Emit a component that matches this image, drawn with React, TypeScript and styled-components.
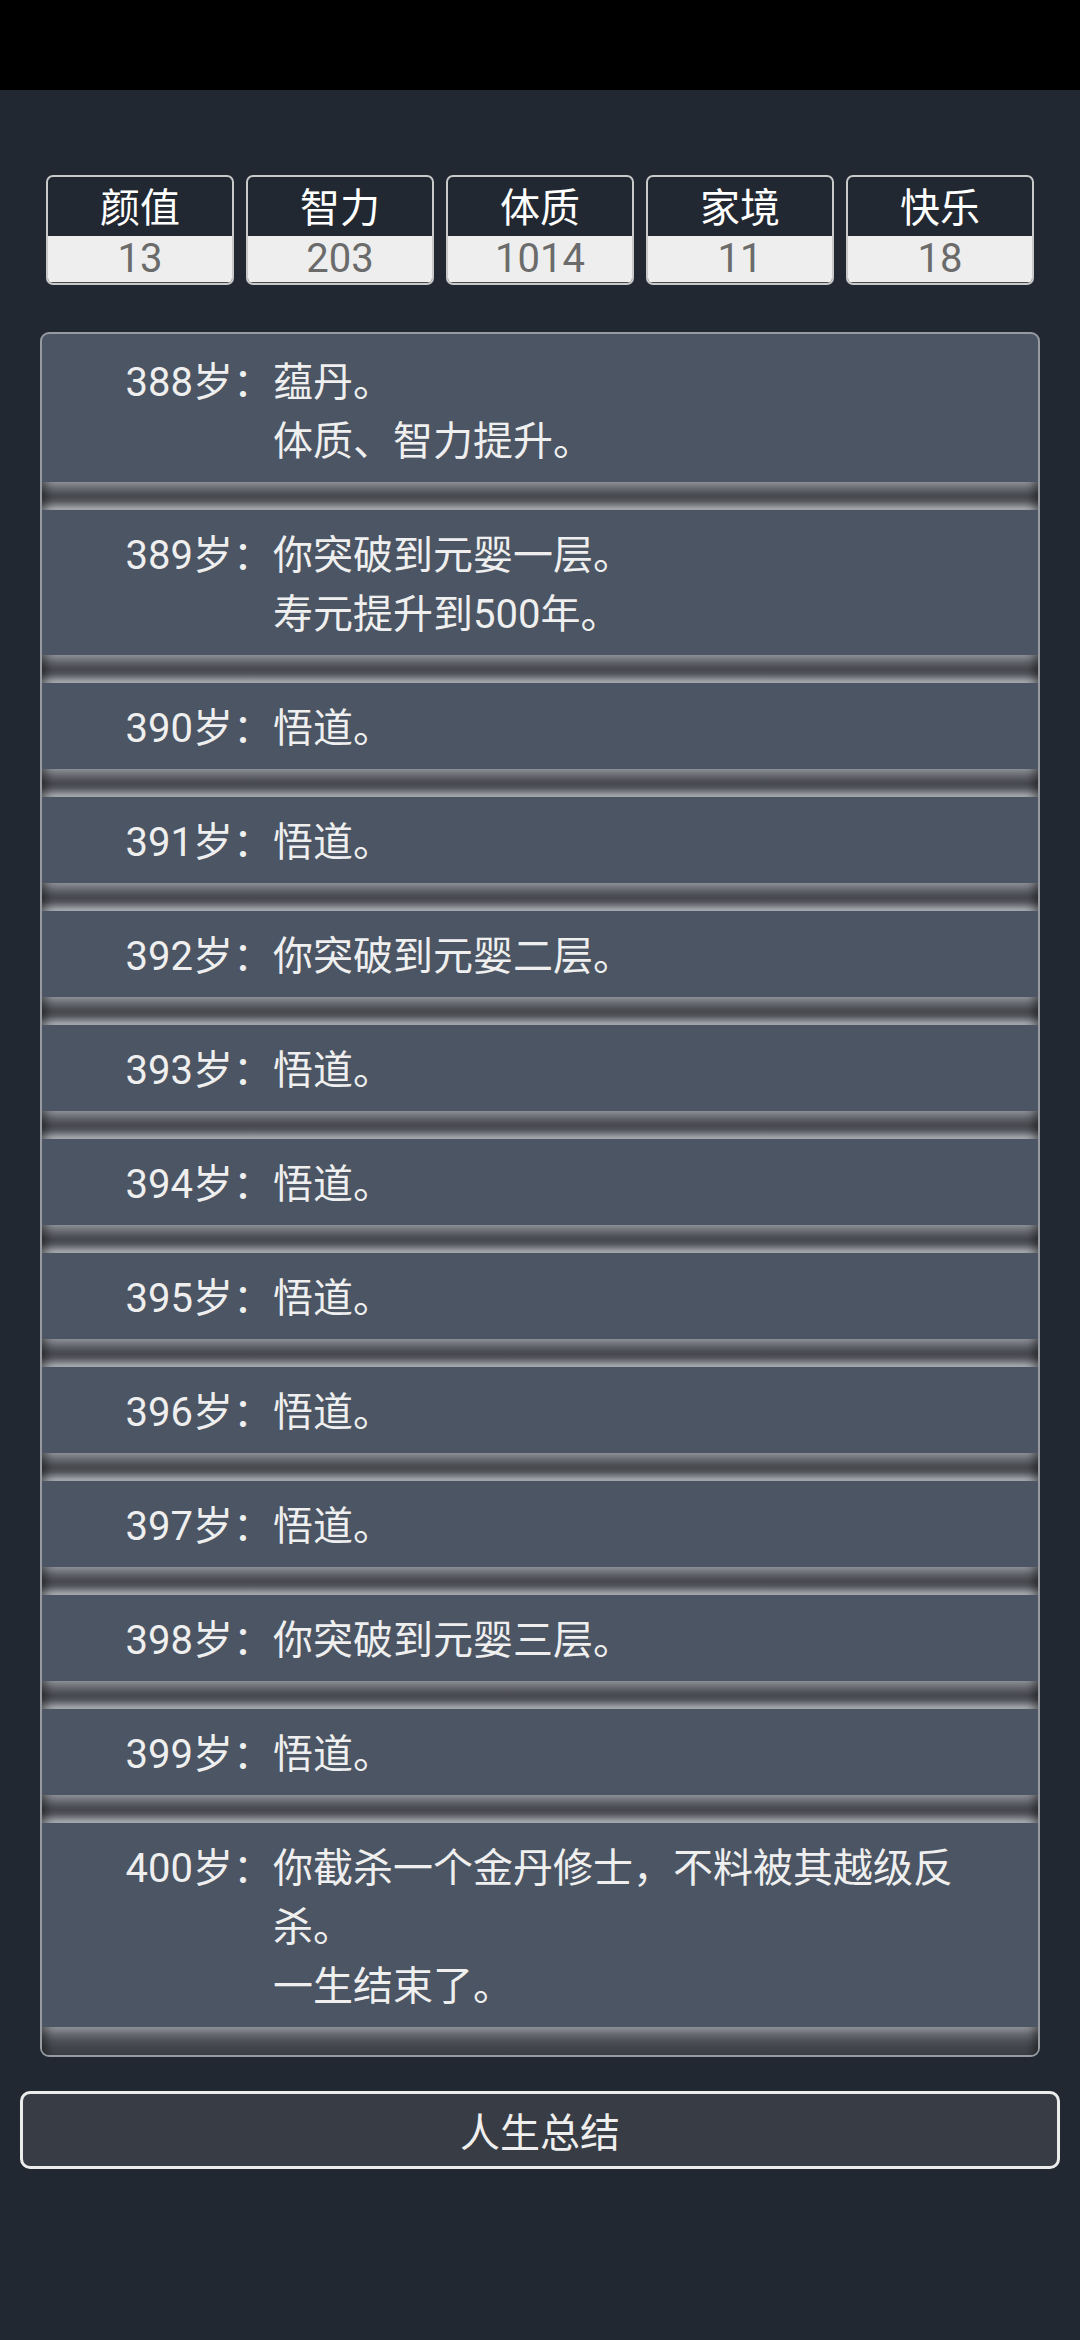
import React from 'react';
import styled, { createGlobalStyle } from 'styled-components';

const GlobalStyle = createGlobalStyle`
  html, body {
    margin: 0;
    padding: 0;
    background: #222831;
    min-height: 100%;
  }
  body {
    font-family: Roboto, "Noto Sans CJK SC", "Noto Sans", sans-serif;
    -webkit-font-smoothing: antialiased;
  }
  * {
    box-sizing: border-box;
  }
`;

const StatusBar = styled.div`
  height: 90px;
  background: #000;
`;

const Main = styled.main`
  display: flex;
  flex-direction: column;
  padding: 85px 0 120px;
`;

const StatsRow = styled.div`
  display: flex;
  gap: 12px;
  padding: 0 46px;
`;

const StatBox = styled.div`
  flex: 1;
  height: 110px;
  display: flex;
  flex-direction: column;
  border: 2px solid #c9c9c9;
  border-radius: 7px;
  overflow: hidden;
`;

const StatLabel = styled.div`
  height: 59px;
  padding-top: 5px;
  line-height: 54px;
  text-align: center;
  color: #ffffff;
  font-size: 40px;
`;

const StatValue = styled.div`
  flex: 1;
  line-height: 46px;
  text-align: center;
  background: #eeeeee;
  color: #6b6b6b;
  font-size: 40px;
  box-shadow: inset 0 -1px 0 #4a4a4a;
`;

const Panel = styled.ul`
  list-style: none;
  margin: 47px 40px 0;
  padding: 3px 0 0;
  background: #4b5563;
  border: 2px solid #979aa0;
  border-radius: 9px;
  overflow: hidden;
`;

const Item = styled.li`
  display: grid;
  grid-template-columns: 231px 1fr;
  padding: 16px 60px 11px 0;
  font-size: 40px;
  line-height: 59px;
  color: #efefef;
`;

const Age = styled.span`
  text-align: right;
  white-space: nowrap;
`;

const Content = styled.span`
  white-space: pre-line;
`;

const Divider = styled.li<{ $last?: boolean }>`
  height: 28px;
  background: ${({ $last }) =>
    $last
      ? `linear-gradient(to bottom, #8c8f95 0px, #7f8288 3px, #63666c 8px, #4e5056 14px, #42454b 20px, #3b3e45 28px)`
      : `linear-gradient(to bottom, #8c8f95 0px, #80838a 2px, #63666c 7px, #4d4f55 12px, #48494f 15px, #55575d 19px, #7b7e84 23px, #9ca0a5 26px, #a3a6ab 28px)`};
  box-shadow: inset 14px 0 10px -10px rgba(0, 0, 0, 0.45),
    inset -14px 0 10px -10px rgba(0, 0, 0, 0.45);
`;

const SummaryButton = styled.button`
  margin: 34px 20px 0;
  height: 78px;
  background: #383c45;
  border: 3px solid #ececec;
  border-radius: 10px;
  color: #efefef;
  font-family: Roboto, "Noto Sans CJK SC", sans-serif;
  font-size: 40px;
  cursor: pointer;
`;

const stats = [
  { label: '颜值', value: 13 },
  { label: '智力', value: 203 },
  { label: '体质', value: 1014 },
  { label: '家境', value: 11 },
  { label: '快乐', value: 18 },
];

const events = [
  { age: 388, text: '蕴丹。\n体质、智力提升。' },
  { age: 389, text: '你突破到元婴一层。\n寿元提升到500年。' },
  { age: 390, text: '悟道。' },
  { age: 391, text: '悟道。' },
  { age: 392, text: '你突破到元婴二层。' },
  { age: 393, text: '悟道。' },
  { age: 394, text: '悟道。' },
  { age: 395, text: '悟道。' },
  { age: 396, text: '悟道。' },
  { age: 397, text: '悟道。' },
  { age: 398, text: '你突破到元婴三层。' },
  { age: 399, text: '悟道。' },
  { age: 400, text: '你截杀一个金丹修士，不料被其越级反杀。\n一生结束了。' },
];

const App: React.FC = () => {
  return (
    <>
      <GlobalStyle />
      <StatusBar />
      <Main>
        <StatsRow>
          {stats.map((s) => (
            <StatBox key={s.label}>
              <StatLabel>{s.label}</StatLabel>
              <StatValue>{s.value}</StatValue>
            </StatBox>
          ))}
        </StatsRow>
        <Panel>
          {events.map((e, i) => (
            <React.Fragment key={e.age}>
              <Item>
                <Age>{e.age}岁：</Age>
                <Content>{e.text}</Content>
              </Item>
              <Divider $last={i === events.length - 1} />
            </React.Fragment>
          ))}
        </Panel>
        <SummaryButton>人生总结</SummaryButton>
      </Main>
    </>
  );
};

export default App;
